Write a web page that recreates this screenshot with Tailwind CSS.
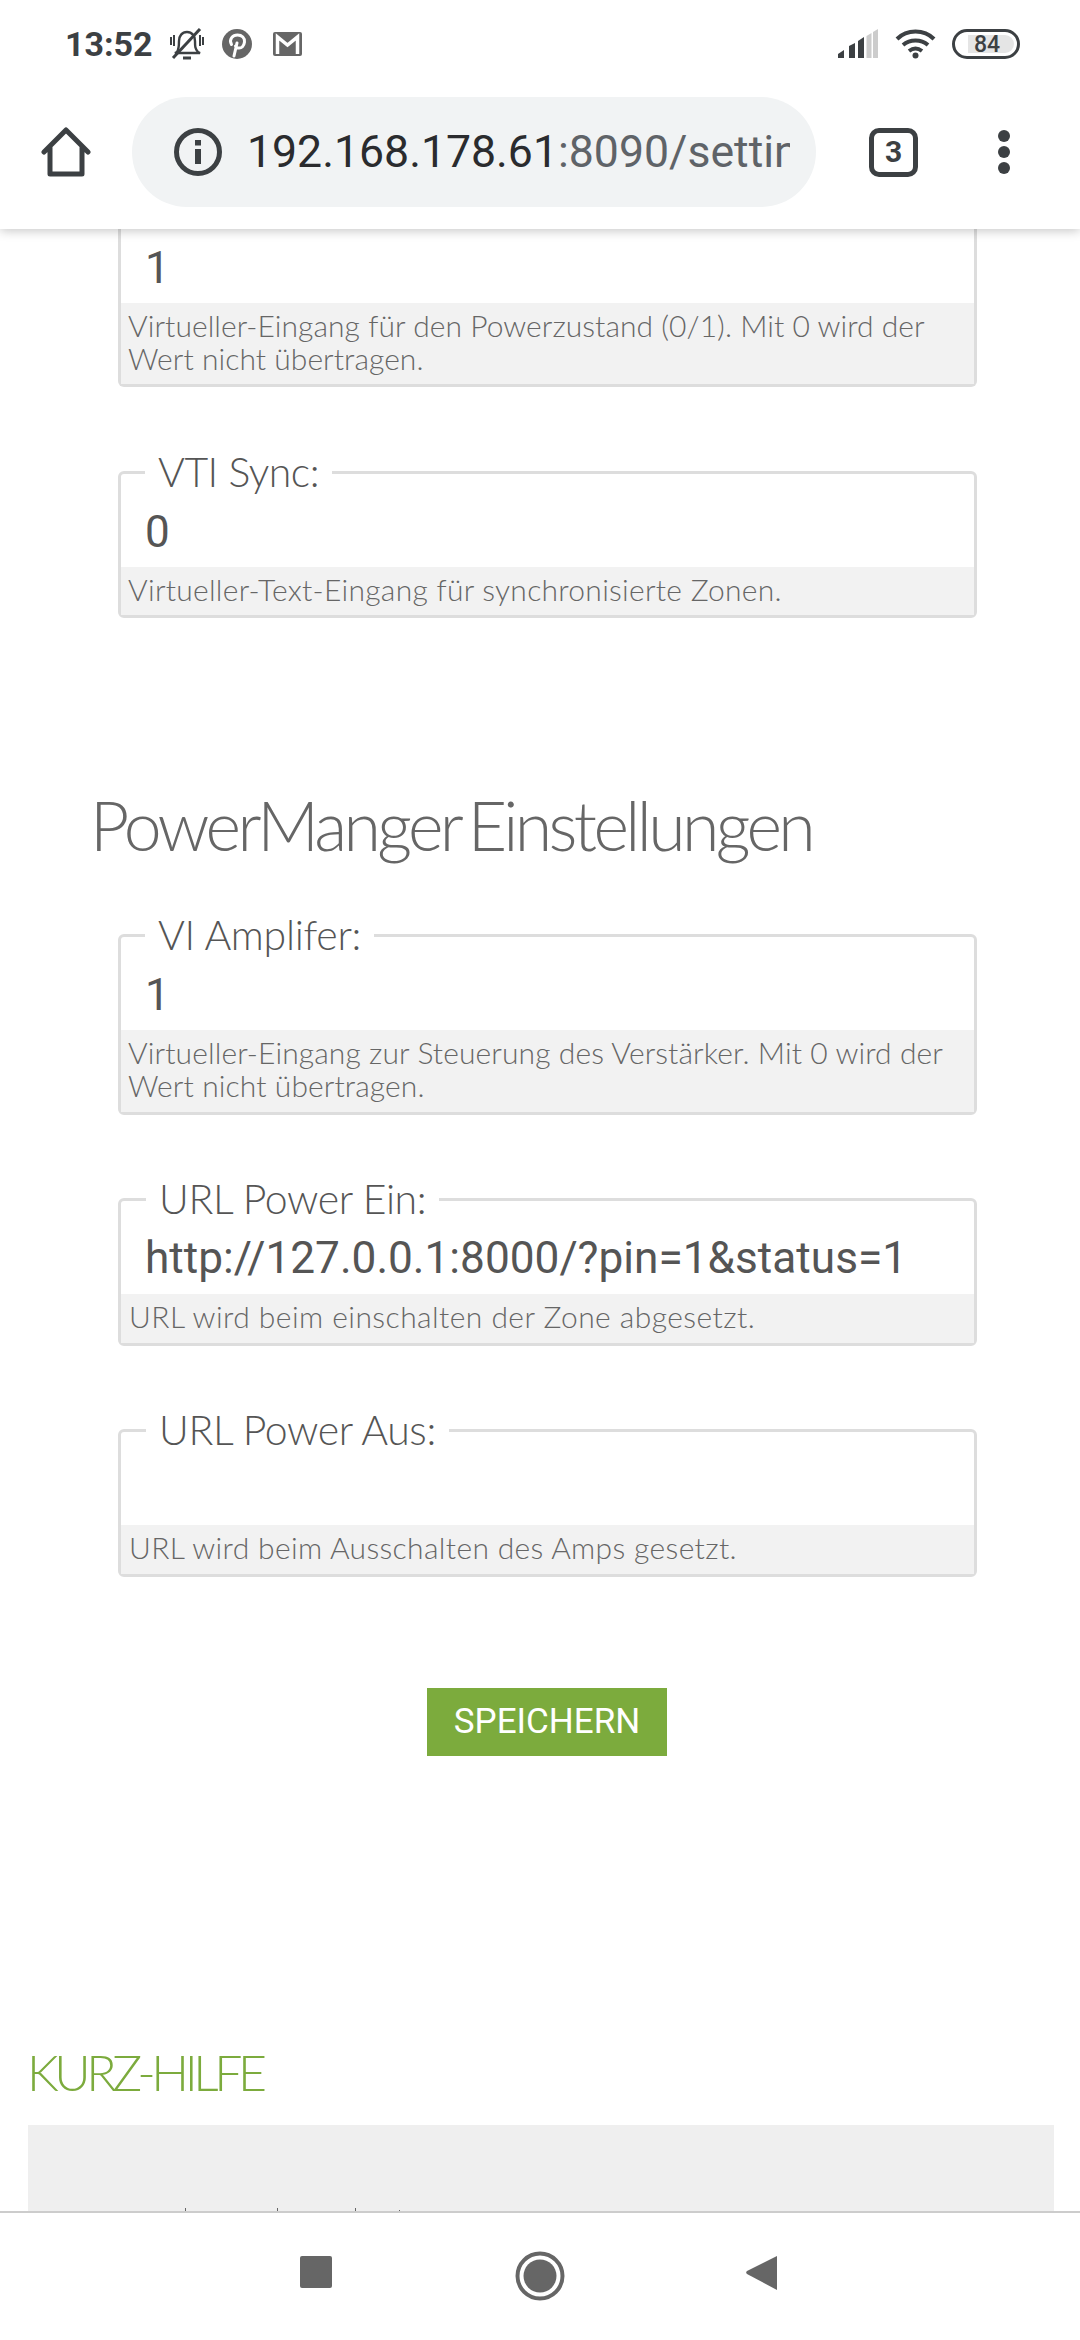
<!DOCTYPE html>
<html lang="de">
<head>
    <meta charset="UTF-8">
    <meta name="viewport" content="width=device-width, initial-scale=1.0">
    <title>Einstellungen</title>
    <script src="https://cdn.jsdelivr.net/npm/@tailwindcss/browser@4"></script>
</head>
<body class="bg-white font-['Lato',sans-serif]">
<div class="flex flex-col h-[2340px] w-[1080px] overflow-hidden">

    <!-- browser chrome -->
    <header class="relative z-10 h-[229px] shrink-0 bg-white shadow-[0_2px_10px_rgba(0,0,0,0.22)]">
        <div class="flex items-center h-[88px] pl-[65px] pr-[60px] text-[#3c4043]">
            <span class="font-['Roboto',sans-serif] font-bold text-[34px] leading-none">13:52</span>
            <svg class="ml-[17px]" width="34" height="32" viewBox="0 0 34 32" fill="none" stroke="#3c4043" stroke-width="2.4">
                <path d="M7 24c2-3 2-6 2-11 0-5 3-9 8-9s8 4 8 9c0 5 0 8 3 11l2 1H5z"/>
                <path d="M13 30h8" stroke-width="3"/>
                <path d="M1 9v8M4 7v11M33 9v8M30 7v11" stroke-width="2"/>
                <path d="M30 1 3 30" stroke-width="3"/>
            </svg>
            <svg class="ml-[18px]" width="30" height="30" viewBox="0 0 30 30">
                <circle cx="15" cy="15" r="15" fill="#666"/>
                <path d="M12 27l3-13M9.500 15.500C6.500 10 11 6 15.500 6c4.500 0 7.500 3 7 7-.5 4-3 6.500-6 6-1.500-.2-2.500-1-3-2" fill="none" stroke="#fff" stroke-width="3" stroke-linecap="round"/>
            </svg>
            <svg class="ml-[21px]" width="29" height="24" viewBox="0 0 29 24">
                <rect width="29" height="24" rx="2" fill="#666"/>
                <path d="M4.500 22V5l10 8 10-8v17" fill="none" stroke="#fff" stroke-width="3.500"/>
            </svg>
            <svg class="ml-auto" width="40" height="30" viewBox="0 0 40 30">
                <path d="M0 29v-4l6-4v8z" fill="#3c4043"/>
                <path d="M11 29V17l6-3v15z" fill="#3c4043"/>
                <path d="M20 29V12l6-4v21z" fill="#3c4043"/>
                <path d="M28.500 29V7l5-3v25z" fill="#ccc"/>
                <path d="M35 29V3l5-3v29z" fill="#ccc"/>
            </svg>
            <svg class="ml-[17px]" width="41" height="30" viewBox="0 0 41 30" fill="none" stroke="#3c4043" stroke-width="4">
                <path d="M2 10C12 0 29 0 39 10"/>
                <path d="M8 16c7-6 18-6 25 0"/>
                <path d="M14 22c4-3 9-3 13 0"/>
                <circle cx="20.500" cy="26.500" r="3" fill="#3c4043" stroke="none"/>
            </svg>
            <div class="ml-[16px] flex items-center justify-center w-[68px] h-[30px] rounded-full border-[3px] border-[#3c4043]">
                <span class="ml-[10px] pr-[8px] w-[46px] h-[18px] rounded-r-full bg-[#e5e5e5] flex items-center justify-center font-['Roboto',sans-serif] font-medium text-[23px] leading-none">84</span>
            </div>
        </div>
        <div class="flex items-center mt-[9px]">
            <svg class="ml-[41px]" width="50" height="50" viewBox="0 0 50 50" fill="none" stroke="#3c4043" stroke-width="5" stroke-linejoin="round" stroke-linecap="round">
                <path d="M3 25 25 3l22 22M9 20v27h32V20"/>
            </svg>
            <div class="ml-[41px] flex items-center w-[684px] h-[110px] rounded-full bg-[#f1f3f4]">
                <svg class="ml-[42px] shrink-0" width="48" height="48" viewBox="0 0 48 48">
                    <circle cx="24" cy="24" r="21.500" fill="none" stroke="#3c4043" stroke-width="5"/>
                    <rect x="21" y="12" width="6" height="5.500" fill="#3c4043"/>
                    <rect x="21" y="21" width="6" height="15" fill="#3c4043"/>
                </svg>
                <div class="ml-[25px] w-[543px] overflow-hidden whitespace-nowrap font-['Roboto',sans-serif] text-[44.6px] leading-none text-[#5f6368]"><span class="text-[#2a2b2e]">192.168.178.61</span>:8090/settings</div>
            </div>
            <div class="ml-[53px] flex items-center justify-center w-[49px] h-[49px] rounded-[10px] border-[5px] border-[#3c4043] font-['Roboto',sans-serif] font-bold text-[30px] leading-none text-[#3c4043]">3</div>
            <div class="ml-[80px] flex flex-col gap-[4px]">
                <span class="w-[12px] h-[12px] rounded-full bg-[#3c4043]"></span>
                <span class="w-[12px] h-[12px] rounded-full bg-[#3c4043]"></span>
                <span class="w-[12px] h-[12px] rounded-full bg-[#3c4043]"></span>
            </div>
        </div>
    </header>

    <!-- page, scrolled -->
    <main class="flex-1 min-h-0 overflow-hidden">
        <div class="ml-[118px] w-[859px] border-[3px] border-t-0 border-[#ddd] rounded-b-[6px]">
            <div class="flex items-center h-[74px] pl-[24px] pt-[3px] font-['Roboto',sans-serif] text-[44px] text-[#555]">1</div>
            <p class="bg-[#f2f2f2] pl-[7px] pt-[6px] pb-[9px] text-[30px] leading-[33px] font-light tracking-[0.05px] text-[#666]">Virtueller-Eingang für den Powerzustand (0/1). Mit 0 wird der Wert nicht übertragen.</p>
        </div>

        <fieldset class="ml-[118px] mt-[61px] w-[859px] border-[3px] border-[#ddd] rounded-[6px]">
            <legend class="ml-[24px] px-[13px] h-[48px] text-[41px] leading-[48px] font-light tracking-[-0.5px] text-[#555]">VTI Sync:</legend>
            <div class="flex items-center h-[71px] pl-[24px] font-['Roboto',sans-serif] text-[44px] text-[#555]">0</div>
            <p class="bg-[#f2f2f2] pl-[7px] pt-[6px] pb-[9px] text-[30px] leading-[33px] font-light tracking-[0.27px] text-[#666]">Virtueller-Text-Eingang für synchronisierte Zonen.</p>
        </fieldset>

        <h2 class="ml-[90px] mt-[167px] mb-[46px] h-[80px] text-[68px] leading-[80px] font-light tracking-[-3.6px] [word-spacing:-6px] text-[#666]">PowerManger Einstellungen</h2>

        <fieldset class="ml-[118px] w-[859px] border-[3px] border-[#ddd] rounded-[6px]">
            <legend class="ml-[24px] px-[13px] h-[48px] text-[41px] leading-[48px] font-light tracking-[-0.3px] text-[#555]">VI Amplifer:</legend>
            <div class="flex items-center h-[71px] pl-[24px] font-['Roboto',sans-serif] text-[44px] text-[#555]">1</div>
            <p class="bg-[#f2f2f2] pl-[7px] pt-[6px] pb-[10px] text-[30px] leading-[33px] font-light tracking-[0.1px] text-[#666]">Virtueller-Eingang zur Steuerung des Verstärker. Mit 0 wird der Wert nicht übertragen.</p>
        </fieldset>

        <fieldset class="ml-[118px] mt-[60px] w-[859px] border-[3px] border-[#ddd] rounded-[6px]">
            <legend class="ml-[25px] px-[13px] h-[48px] text-[41px] leading-[48px] font-light tracking-[-0.4px] text-[#555]">URL Power Ein:</legend>
            <div class="flex items-center h-[71px] pl-[24px] font-['Roboto',sans-serif] text-[44.2px] text-[#555]">http://127.0.0.1:8000/?pin=1&amp;status=1</div>
            <p class="bg-[#f2f2f2] pl-[8px] pt-[6px] pb-[10px] text-[30px] leading-[33px] font-light tracking-[0.44px] text-[#666]">URL wird beim einschalten der Zone abgesetzt.</p>
        </fieldset>

        <fieldset class="ml-[118px] mt-[60px] w-[859px] border-[3px] border-[#ddd] rounded-[6px]">
            <legend class="ml-[25px] px-[13px] h-[48px] text-[41px] leading-[48px] font-light tracking-[-0.4px] text-[#555]">URL Power Aus:</legend>
            <div class="h-[71px]"></div>
            <p class="bg-[#f2f2f2] pl-[8px] pt-[6px] pb-[10px] text-[30px] leading-[33px] font-light tracking-[0.35px] text-[#666]">URL wird beim Ausschalten des Amps gesetzt.</p>
        </fieldset>

        <div class="mt-[111px] flex justify-center pl-[14px]">
            <button class="w-[240px] h-[68px] bg-[#7cab3d] font-['Roboto',sans-serif] text-[35px] text-white">SPEICHERN</button>
        </div>

        <h3 class="ml-[27px] mt-[286px] h-[60px] text-[50px] leading-[60px] font-light tracking-[-4.4px] text-[#7cab3d]">KURZ-HILFE</h3>
        <div class="relative ml-[28px] mt-[23px] w-[1026px] h-[200px] bg-[#efefef]">
            <span class="absolute left-[157px] top-[83px] w-[1px] h-[3px] bg-[#666]"></span>
            <span class="absolute left-[249px] top-[83px] w-[1px] h-[3px] bg-[#666]"></span>
            <span class="absolute left-[327px] top-[83px] w-[1px] h-[3px] bg-[#666]"></span>
            <span class="absolute left-[371px] top-[85px] w-[1px] h-[1px] bg-[#666]"></span>
        </div>
    </main>

    <!-- android nav -->
    <footer class="relative z-10 h-[129px] shrink-0 bg-white border-t-[2px] border-[#ccc] flex items-start">
        <div class="ml-[300px] mt-[43px] w-[32px] h-[32px] rounded-[2px] bg-[#666]"></div>
        <svg class="ml-[183px] mt-[38px]" width="50" height="50" viewBox="0 0 50 50">
            <circle cx="25" cy="25" r="22.500" fill="none" stroke="#666" stroke-width="4"/>
            <circle cx="25" cy="25" r="16.500" fill="#666"/>
        </svg>
        <svg class="ml-[180px] mt-[41px]" width="32" height="38" viewBox="0 0 32 38">
            <path d="M32 2v34L2 20a2 2 0 0 1 0-3z" fill="#666"/>
        </svg>
    </footer>
</div>
</body>
</html>
